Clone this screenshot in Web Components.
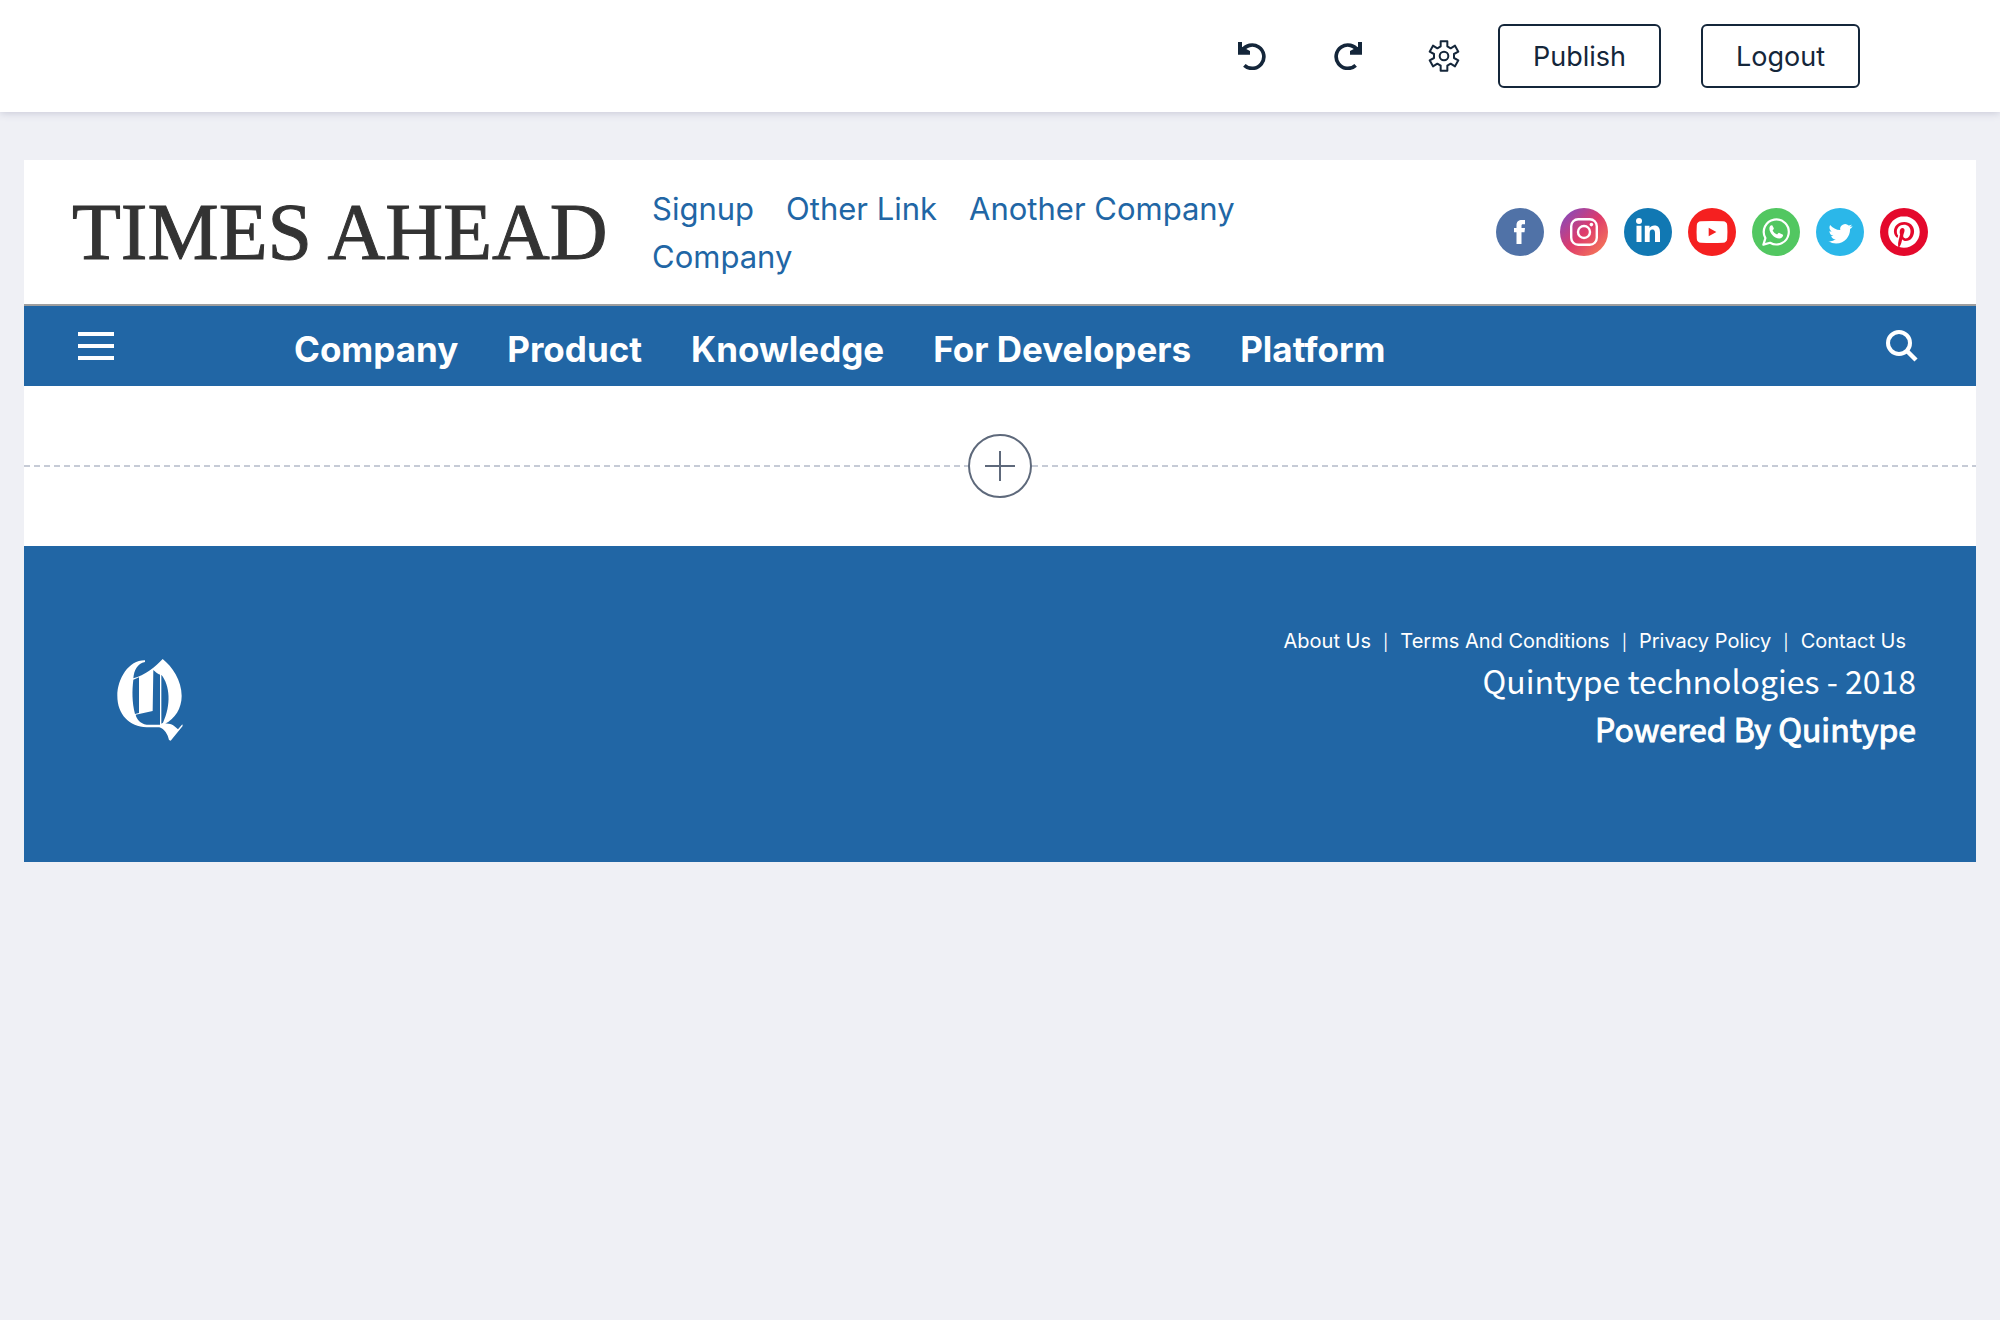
<!DOCTYPE html>
<html lang="en">
<head>
<meta charset="utf-8">
<title>Times Ahead</title>
<style>
body{margin:0;background:#eff0f5;font-family:Inter,"Liberation Sans",sans-serif;color:#14263a}
main{margin:48px 24px;background:#fff}
</style>
</head>
<body>
<editor-bar></editor-bar>
<main>
<site-header>
<a slot="link" href="#signup">Signup</a>
<a slot="link" href="#other">Other Link</a>
<a slot="link" href="#another">Another Company</a>
<a slot="link" href="#company">Company</a>
</site-header>
<site-nav>
<a href="#company">Company</a>
<a href="#product">Product</a>
<a href="#knowledge">Knowledge</a>
<a href="#developers">For Developers</a>
<a href="#platform">Platform</a>
</site-nav>
<add-row></add-row>
<site-footer>
<a slot="link" href="#about">About Us</a>
<a slot="link" href="#terms">Terms And Conditions</a>
<a slot="link" href="#privacy">Privacy Policy</a>
<a slot="link" href="#contact">Contact Us</a>
<span slot="owner">Quintype technologies - 2018</span>
<span slot="powered">Powered By Quintype</span>
</site-footer>
</main>
<script>
const base = `:host,*{box-sizing:border-box}svg{display:block}button{font:inherit;color:inherit;background:none;border:0;padding:0;margin:0;cursor:pointer}a{text-decoration:none;color:inherit}`;
const define = (name, html) => customElements.define(name, class extends HTMLElement {
  constructor() {
    super();
    this.attachShadow({mode: 'open'}).innerHTML = `<style>${base}</style>${html}`;
  }
});

define('editor-bar', `<style>
:host{display:flex;justify-content:flex-end;align-items:center;height:112px;padding-right:140px;background:#fff;box-shadow:0 1px 8px #c6c7d6}
.tools{display:flex;gap:48px;margin-right:30px}
.tool{width:48px;height:48px;display:grid;place-items:center}
.actions{display:flex;gap:40px}
.action{height:64px;padding:2px 33px 0;border:2px solid #14263a;border-radius:6px;font-size:27px;line-height:32px}
</style>
<div class="tools">
<button class="tool" aria-label="Undo"><svg width="28" height="28" viewBox="54 48 84 84"><path d="M73 118A35 35 0 1 0 66 75" fill="none" stroke="#14263a" stroke-width="11"/><path d="M54 48h12v14l24 13v11H54z" fill="#14263a"/></svg></button>
<button class="tool" aria-label="Redo"><svg width="28" height="28" viewBox="54 48 84 84"><g transform="matrix(-1 0 0 1 192 0)"><path d="M73 118A35 35 0 1 0 66 75" fill="none" stroke="#14263a" stroke-width="11"/><path d="M54 48h12v14l24 13v11H54z" fill="#14263a"/></g></svg></button>
<button class="tool" aria-label="Settings"><svg width="32" height="32" viewBox="-48 -48 96 96" fill="none" stroke="#14263a" stroke-width="6" stroke-linejoin="round"><path d="M-10-29V-44H10V-29L20-23 33-31 43-13 30-6V6L43 13 33 31 20 23 10 29V44H-10V29L-20 23-33 31-43 13-30 6V-6L-43-13-33-31-20-23Z"/><circle r="13"/></svg></button>
</div>
<div class="actions"><button class="action">Publish</button><button class="action">Logout</button></div>`);

define('social-icon', `<style>
:host{display:block}
a{display:block}
::slotted(svg){display:block;width:48px;height:48px}
</style><a href="#social"><slot></slot></a>`);

define('site-header', `<style>
:host{display:flex;align-items:center;height:144px;padding:0 48px}
.logo{flex:none;width:532px;margin-right:48px;font:80px/96px "Liberation Serif",serif;color:#333;white-space:nowrap;-webkit-text-stroke:1px #333}
nav{display:flex;flex-wrap:wrap;column-gap:32px;max-width:640px;padding-top:2px;font-size:31px;line-height:48px;color:#2166a5}
::slotted(a){text-decoration:none;color:inherit}
.social{display:flex;gap:16px;margin-left:auto}
</style>
<a class="logo" href="#home">TIMES AHEAD</a>
<nav aria-label="Secondary"><slot name="link"></slot></nav>
<div class="social">
<social-icon><svg viewBox="0 0 48 48"><title>Facebook</title><circle cx="24" cy="24" r="24" fill="#5072a7"/><path fill="#fff" d="M20.5 36V24.2H18V20h2.500v-2.500C20.500 13.500 22.500 12 26 12h3v4.200h-2c-1.300 0-1.500.6-1.500 1.600V20H29l-.5 4.200h-3V36z"/></svg></social-icon>
<social-icon><svg viewBox="0 0 48 48"><title>Instagram</title><defs><linearGradient id="ig" x1=".1" y1=".1" x2=".9" y2=".9"><stop stop-color="#8a4ab8"/><stop offset=".5" stop-color="#dd3b6c"/><stop offset="1" stop-color="#f57558"/></linearGradient></defs><circle cx="24" cy="24" r="24" fill="url(#ig)"/><g fill="none" stroke="#fff" stroke-width="2.400"><rect x="11.200" y="11.200" width="25.600" height="25.600" rx="7"/><circle cx="24" cy="24" r="6"/></g><circle cx="31.400" cy="16.600" r="1.800" fill="#fff"/></svg></social-icon>
<social-icon><svg viewBox="0 0 48 48"><title>LinkedIn</title><circle cx="24" cy="24" r="24" fill="#1178b3"/><g fill="#fff"><circle cx="15" cy="13" r="3"/><path d="M12.500 17.800h5V34h-5zM20.800 17.800h4.700V20c1-1.700 2.700-2.600 4.800-2.600 4.300 0 5.700 2.700 5.700 7V34h-5v-8.500c0-2.200-.4-3.900-2.500-3.900-2.200 0-2.800 1.700-2.800 3.800V34h-4.900z"/></g></svg></social-icon>
<social-icon><svg viewBox="0 0 48 48"><title>YouTube</title><circle cx="24" cy="24" r="24" fill="#f52020"/><path fill="#fff" d="M13 13.300q11-.8 22 0 4 .3 4.200 4 .5 6.700 0 13.400-.3 3.700-4.200 4-11 .6-22 0-4-.3-4.200-4-.5-6.700 0-13.400.2-3.700 4.200-4z"/><path fill="#f52020" d="M20.700 19.700v8.500l7.700-4.200z"/></svg></social-icon>
<social-icon><svg viewBox="0 0 48 48"><title>WhatsApp</title><circle cx="24" cy="24" r="24" fill="#52c761"/><path fill="none" stroke="#fff" stroke-width="2.200" stroke-linejoin="round" d="M11.400 36.600 13.400 30.100A12.500 12.500 0 1 1 18.100 34.800Z"/><path fill="#fff" d="M20.200 17.300c-.8-.3-1.500 0-2.100.8-2.700 4 2.800 12.400 9.200 12.400 2 0 3.600-1.300 3.800-3.200 0-.5-.2-.7-.6-.9l-3.200-1.500c-.5-.2-.8 0-1.100.4l-1.100 1.300c-2-.8-3.500-2.100-4.500-4l1-1.400c.3-.4.300-.7.100-1.100z"/></svg></social-icon>
<social-icon><svg viewBox="0 0 48 48"><title>Twitter</title><circle cx="24" cy="24" r="24" fill="#2bb7e9"/><path fill="#fff" transform="translate(12.500 13.800)" d="M23.953 4.570a10 10 0 01-2.825.775 4.958 4.958 0 002.163-2.723c-.951.555-2.005.959-3.127 1.184a4.920 4.920 0 00-8.384 4.482C7.690 8.095 4.067 6.130 1.640 3.162a4.822 4.822 0 00-.666 2.475c0 1.710.870 3.213 2.188 4.096a4.904 4.904 0 01-2.228-.616v.060a4.923 4.923 0 003.946 4.827 4.996 4.996 0 01-2.212.085 4.936 4.936 0 004.604 3.417 9.867 9.867 0 01-6.102 2.105c-.390 0-.779-.023-1.170-.067a13.995 13.995 0 007.557 2.209c9.053 0 13.998-7.496 13.998-13.985 0-.210 0-.420-.015-.630A9.935 9.935 0 0024 4.590z"/></svg></social-icon>
<social-icon><svg viewBox="0 0 48 48"><title>Pinterest</title><circle cx="24" cy="24" r="24" fill="#e4092c"/><path fill="#fff" transform="translate(8.200 8.200) scale(1.315)" d="M12.017 0C5.396 0 .029 5.367.029 11.987c0 5.079 3.158 9.417 7.618 11.162-.105-.949-.199-2.403.041-3.439.219-.937 1.406-5.957 1.406-5.957s-.359-.720-.359-1.781c0-1.663.967-2.911 2.168-2.911 1.024 0 1.518.769 1.518 1.688 0 1.029-.653 2.567-.992 3.992-.285 1.193.600 2.165 1.775 2.165 2.128 0 3.768-2.245 3.768-5.487 0-2.861-2.063-4.869-5.008-4.869-3.410 0-5.409 2.562-5.409 5.199 0 1.033.394 2.143.889 2.741.099.120.112.225.085.345-.090.375-.293 1.199-.334 1.363-.053.225-.172.271-.401.165-1.495-.690-2.433-2.878-2.433-4.646 0-3.776 2.748-7.252 7.920-7.252 4.158 0 7.392 2.967 7.392 6.923 0 4.135-2.607 7.462-6.233 7.462-1.214 0-2.354-.629-2.758-1.379l-.749 2.848c-.269 1.045-1.004 2.352-1.498 3.146 1.123.345 2.306.535 3.550.535 6.607 0 11.985-5.365 11.985-11.987C23.970 5.390 18.592.026 11.985.026z"/></svg></social-icon>
</div>`);

define('site-nav', `<style>
:host{display:flex;align-items:center;height:82px;border-top:2px solid #9e9e9e;background:#2166a5;color:#fff;padding:0 54px 0 48px}
.menu{width:48px;height:48px;display:grid;place-items:center;margin-right:174px}
nav{display:flex;gap:49px;font-size:35px;font-weight:700;line-height:48px;padding-top:6px}
::slotted(a){color:inherit;text-decoration:none}
.search{width:40px;height:40px;display:grid;place-items:center;margin-left:auto}
</style>
<button class="menu" aria-label="Menu"><svg width="36" height="28" viewBox="0 0 36 28" fill="#fff"><path d="M0 0h36v4H0zM0 12h36v4H0zM0 24h36v4H0z"/></svg></button>
<nav aria-label="Main"><slot></slot></nav>
<button class="search" aria-label="Search"><svg width="32" height="32" viewBox="0 0 32 32" fill="none" stroke="#fff"><circle cx="13" cy="13" r="11" stroke-width="4"/><path stroke-width="4.400" d="M20.500 20.500 30 30"/></svg></button>`);

define('add-row', `<style>
:host{display:flex;align-items:center;height:160px}
:host::before,:host::after{content:"";flex:1;height:2px;background:repeating-linear-gradient(90deg,#c6cbd6 0 6px,transparent 6px 10px)}
button{width:64px;height:64px;border:2px solid #5e697b;border-radius:50%;display:grid;place-items:center}
</style>
<button aria-label="Add row"><svg width="30" height="30" viewBox="0 0 30 30" stroke="#5e697b" stroke-width="2"><path d="M15 0v30M0 15h30"/></svg></button>`);

define('site-footer', `<style>
:host{display:flex;align-items:center;justify-content:space-between;height:316px;padding:0 60px 8px 92px;background:#2166a5;color:#fff}
.text{display:flex;flex-direction:column;align-items:flex-end;padding-bottom:22px;font:32px/48px "Noto Sans CJK SC",sans-serif}
nav{display:flex;padding-right:10px;font:20px/28px Inter,"Liberation Sans",sans-serif}
::slotted(a){color:inherit;text-decoration:none}
::slotted(a:not(:first-of-type))::before{content:"|";margin:0 12px;font-size:16px}
.powered{-webkit-text-stroke:1px #fff}
</style>
<a href="#home" aria-label="Quintype"><svg width="68" height="84" viewBox="48 54 204 252" fill="#fff"><path d="M135 61C87 60 52 115 52 168c0 55 36 92 88 94l38 0c15 4 26 22 29 38l5 2 36-44-1-5-13 15c-10-9-20-19-39-17 30-14 50-46 50-83 0-46-28-88-57-111-20 22-55 50-88 58 2-24 12-45 35-49zM160 90c15 14 20 14 20 14v150h-40c-20-4-30-16-33-30l51-11zM117 112v107l-12 3c-9-36-9-70-5-103zM184 104c26 32 30 90 5 144l-5 3z" fill-rule="evenodd"/></svg></a>
<div class="text"><nav aria-label="Footer"><slot name="link"></slot></nav><slot name="owner"></slot><div class="powered"><slot name="powered"></slot></div></div>`);
</script>
</body>
</html>
